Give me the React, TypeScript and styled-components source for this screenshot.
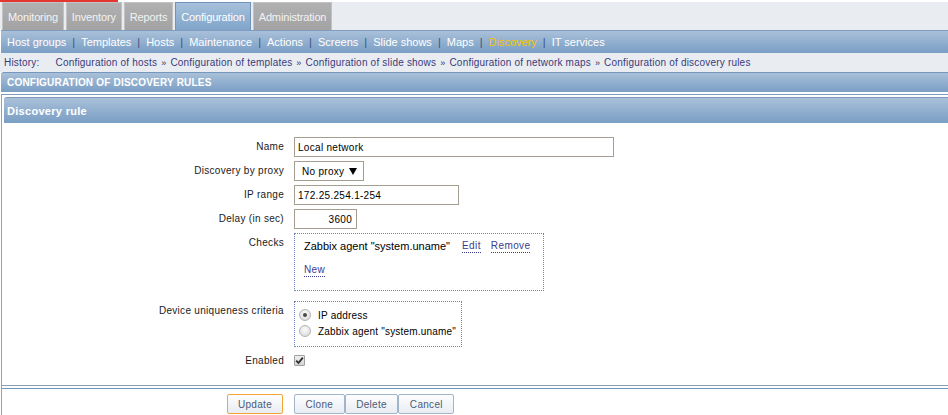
import { createGlobalStyle, styled } from 'styled-components'

const GlobalStyle = createGlobalStyle`
  body {
    margin: 0;
    background: #ffffff;
    font-family: "Liberation Sans", Arial, sans-serif;
    color: #1a1a1a;
  }
`

const Page = styled.div`
  width: 100%;
  min-height: 415px;
  overflow: hidden;
`

const TopStrip = styled.div`
  height: 2px;
  background: #ffffff;
`

const RedBar = styled.div`
  width: 118px;
  height: 2px;
  background: #e5352f;
`

const TabBar = styled.div`
  display: flex;
  gap: 2px;
  height: 28px;
  padding-left: 2px;
  background: #e9edf1;
`

const Tab = styled.div<{ $active?: boolean }>`
  display: flex;
  align-items: center;
  padding: 0 5px;
  font-size: 11px;
  letter-spacing: -0.15px;
  box-sizing: border-box;
  color: ${(p) => (p.$active ? '#ffffff' : '#f3f3f3')};
  border: 1px solid ${(p) => (p.$active ? '#6f93bb' : '#c2c2c2')};
  border-bottom: none;
  background: ${(p) =>
    p.$active
      ? 'linear-gradient(#a6c1dc, #80a4c9)'
      : 'linear-gradient(#b0b0b0, #a3a3a3)'};
`

const SubMenu = styled.div`
  display: flex;
  align-items: center;
  height: 22px;
  margin-left: 1px;
  padding-left: 6px;
  border-top: 1px solid #7f9cc0;
  background: linear-gradient(#a9c0d9, #7a9ec4);
  font-size: 11px;
  color: #ffffff;
`

const MenuItem = styled.span<{ $current?: boolean }>`
  color: ${(p) => (p.$current ? '#f5c400' : '#ffffff')};
`

const MenuSep = styled.span`
  margin: 0 6px;
  color: #3d4f80;
`

const History = styled.div`
  display: flex;
  align-items: center;
  height: 19px;
  padding-left: 4px;
  background: #e9edf1;
  font-size: 10px;
  letter-spacing: 0.2px;
  color: #3a3a7c;
`

const HistoryLabel = styled.span`
  margin-right: 16px;
`

const HistorySep = styled.span`
  margin: 0 4px;
  font-size: 9px;
  color: #333355;
`

const PageHeader = styled.div`
  display: flex;
  align-items: center;
  height: 19px;
  margin-left: 1px;
  padding-left: 6px;
  border-top: 1px solid #7596bd;
  border-top-left-radius: 3px;
  background: linear-gradient(#a9c0d9, #7a9ec4);
  font-size: 10px;
  font-weight: bold;
  letter-spacing: 0.2px;
  color: #ffffff;
`

const Frame = styled.div`
  margin: 2px 0 0 1px;
  border-top: 1px solid #7d9bbf;
  border-left: 1px solid #8ea2ba;
  padding-top: 2px;
`

const FormHeader = styled.div`
  display: flex;
  align-items: center;
  height: 25px;
  margin-left: 2px;
  padding-left: 3px;
  border-top: 1px solid #7d9bbf;
  border-top-left-radius: 3px;
  background: linear-gradient(#a9c0d9, #7a9ec4);
  font-size: 11px;
  font-weight: bold;
  letter-spacing: 0.3px;
  color: #ffffff;
`

const FormGrid = styled.div`
  display: grid;
  grid-template-columns: 282px 1fr;
  align-items: start;
  column-gap: 10px;
  row-gap: 4px;
  padding: 14px 0 14px;
  border-bottom: 1px solid #8c9db2;
`

const Label = styled.div`
  text-align: right;
  line-height: 20px;
  font-size: 10px;
  letter-spacing: 0.3px;
  color: #1a1a1a;
`

const TextInput = styled.input<{ $width: number; $right?: boolean }>`
  display: block;
  box-sizing: border-box;
  width: ${(p) => p.$width}px;
  height: 20px;
  margin: 0;
  padding: 0 4px 0 3px;
  border: 1px solid #a39e8f;
  font-family: "Liberation Sans", Arial, sans-serif;
  font-size: 10px;
  letter-spacing: 0.3px;
  color: #000000;
  text-align: ${(p) => (p.$right ? 'right' : 'left')};
  outline: none;
`

const FakeSelect = styled.div`
  box-sizing: border-box;
  display: flex;
  align-items: center;
  justify-content: space-between;
  width: 70px;
  height: 20px;
  padding: 0 6px 0 7px;
  border: 1px solid #a39e8f;
  font-size: 10px;
  letter-spacing: 0.3px;
  color: #000000;
`

const DottedBox = styled.div<{ $width: number; $height: number }>`
  box-sizing: border-box;
  width: ${(p) => p.$width}px;
  height: ${(p) => p.$height}px;
  border: 1px dotted #6f80c0;
`

const ChecksBox = styled(DottedBox)`
  display: flex;
  flex-direction: column;
  gap: 10px;
  padding: 5px 9px;
  margin-bottom: 6px;
`

const CheckRow = styled.div`
  display: flex;
  align-items: center;
  height: 14px;
  font-size: 11px;
  color: #000000;
`

const LinkText = styled.span<{ $gap?: number }>`
  margin-left: ${(p) => p.$gap ?? 0}px;
  font-size: 10px;
  letter-spacing: 0.4px;
  color: #3b3b8f;
  line-height: 12px;
  border-bottom: 1px dotted #3b3b8f;
`

const RadioBox = styled(DottedBox)`
  display: flex;
  flex-direction: column;
  padding: 5px 4px;
`

const RadioRow = styled.div`
  display: flex;
  align-items: center;
  gap: 7px;
  height: 16px;
  font-size: 10px;
  letter-spacing: 0.2px;
  color: #000000;
`

const Radio = styled.span<{ $checked?: boolean }>`
  box-sizing: border-box;
  display: flex;
  align-items: center;
  justify-content: center;
  width: 12px;
  height: 12px;
  border-radius: 50%;
  border: 1px solid #b3b3b3;
  background: radial-gradient(circle at 50% 35%, #fbfbfb, #d6d6d6);

  &::after {
    content: '';
    display: ${(p) => (p.$checked ? 'block' : 'none')};
    width: 4px;
    height: 4px;
    border-radius: 50%;
    background: #4a4a4a;
  }
`

const CheckBox = styled.span`
  box-sizing: border-box;
  display: flex;
  align-items: center;
  justify-content: center;
  width: 11px;
  height: 11px;
  margin-top: 4px;
  border: 1px solid #a0a0a0;
  border-radius: 1px;
  background: linear-gradient(#f0f0f0, #d4d4d4);
`

const Footer = styled.div`
  display: grid;
  grid-template-columns: 282px 1fr;
  column-gap: 10px;
  margin-top: 2px;
  padding: 5px 0 8px;
  border-top: 1px solid #7098c0;
`

const ButtonGroup = styled.div`
  display: flex;
`

const Button = styled.button<{ $primary?: boolean }>`
  display: block;
  height: 20px;
  margin: 0;
  padding: 0 ${(p) => (p.$primary ? '10px' : '10.5px')};
  border: 1px solid ${(p) => (p.$primary ? '#f3a533' : '#a3b5ca')};
  border-radius: 2px;
  background: linear-gradient(#fdfdfe, #e8edf2);
  font-family: "Liberation Sans", Arial, sans-serif;
  font-size: 10px;
  letter-spacing: 0.3px;
  color: #4b5a78;
  justify-self: ${(p) => (p.$primary ? 'end' : 'start')};
  margin-right: ${(p) => (p.$primary ? '1px' : '0')};
`

const tabs = ['Monitoring', 'Inventory', 'Reports', 'Configuration', 'Administration']
const menu = [
  'Host groups',
  'Templates',
  'Hosts',
  'Maintenance',
  'Actions',
  'Screens',
  'Slide shows',
  'Maps',
  'Discovery',
  'IT services',
]
const history = [
  'Configuration of hosts',
  'Configuration of templates',
  'Configuration of slide shows',
  'Configuration of network maps',
  'Configuration of discovery rules',
]

export default function App() {
  return (
    <Page>
      <GlobalStyle />
      <TopStrip>
        <RedBar />
      </TopStrip>
      <TabBar>
        {tabs.map((t) => (
          <Tab key={t} $active={t === 'Configuration'}>
            {t}
          </Tab>
        ))}
      </TabBar>
      <SubMenu>
        {menu.map((m, i) => (
          <span key={m}>
            {i > 0 && <MenuSep>|</MenuSep>}
            <MenuItem $current={m === 'Discovery'}>{m}</MenuItem>
          </span>
        ))}
      </SubMenu>
      <History>
        <HistoryLabel>History:</HistoryLabel>
        {history.map((h, i) => (
          <span key={h}>
            {i > 0 && <HistorySep>»</HistorySep>}
            {h}
          </span>
        ))}
      </History>
      <PageHeader>CONFIGURATION OF DISCOVERY RULES</PageHeader>

      <Frame>
        <FormHeader>Discovery rule</FormHeader>
        <FormGrid>
          <Label>Name</Label>
          <TextInput $width={320} value="Local network" readOnly />

          <Label>Discovery by proxy</Label>
          <FakeSelect>
            No proxy
            <svg width="8" height="8" viewBox="0 0 8 8">
              <polygon points="0,1 8,1 4,8" fill="#000" />
            </svg>
          </FakeSelect>

          <Label>IP range</Label>
          <TextInput $width={165} value="172.25.254.1-254" readOnly />

          <Label>Delay (in sec)</Label>
          <TextInput $width={63} $right value="3600" readOnly />

          <Label>Checks</Label>
          <ChecksBox $width={250} $height={58}>
            <CheckRow>
              Zabbix agent "system.uname"
              <LinkText $gap={12}>Edit</LinkText>
              <LinkText $gap={10}>Remove</LinkText>
            </CheckRow>
            <CheckRow>
              <LinkText>New</LinkText>
            </CheckRow>
          </ChecksBox>

          <Label>Device uniqueness criteria</Label>
          <RadioBox $width={168} $height={46}>
            <RadioRow>
              <Radio $checked />
              IP address
            </RadioRow>
            <RadioRow>
              <Radio />
              Zabbix agent "system.uname"
            </RadioRow>
          </RadioBox>

          <Label>Enabled</Label>
          <CheckBox>
            <svg width="9" height="9" viewBox="0 0 9 9">
              <path d="M1.2 4.6 L3.5 7 L7.8 1.6" stroke="#2b2b2b" strokeWidth="1.8" fill="none" />
            </svg>
          </CheckBox>
        </FormGrid>

        <Footer>
          <Button $primary>Update</Button>
          <ButtonGroup>
            <Button>Clone</Button>
            <Button>Delete</Button>
            <Button>Cancel</Button>
          </ButtonGroup>
        </Footer>
      </Frame>
    </Page>
  )
}
